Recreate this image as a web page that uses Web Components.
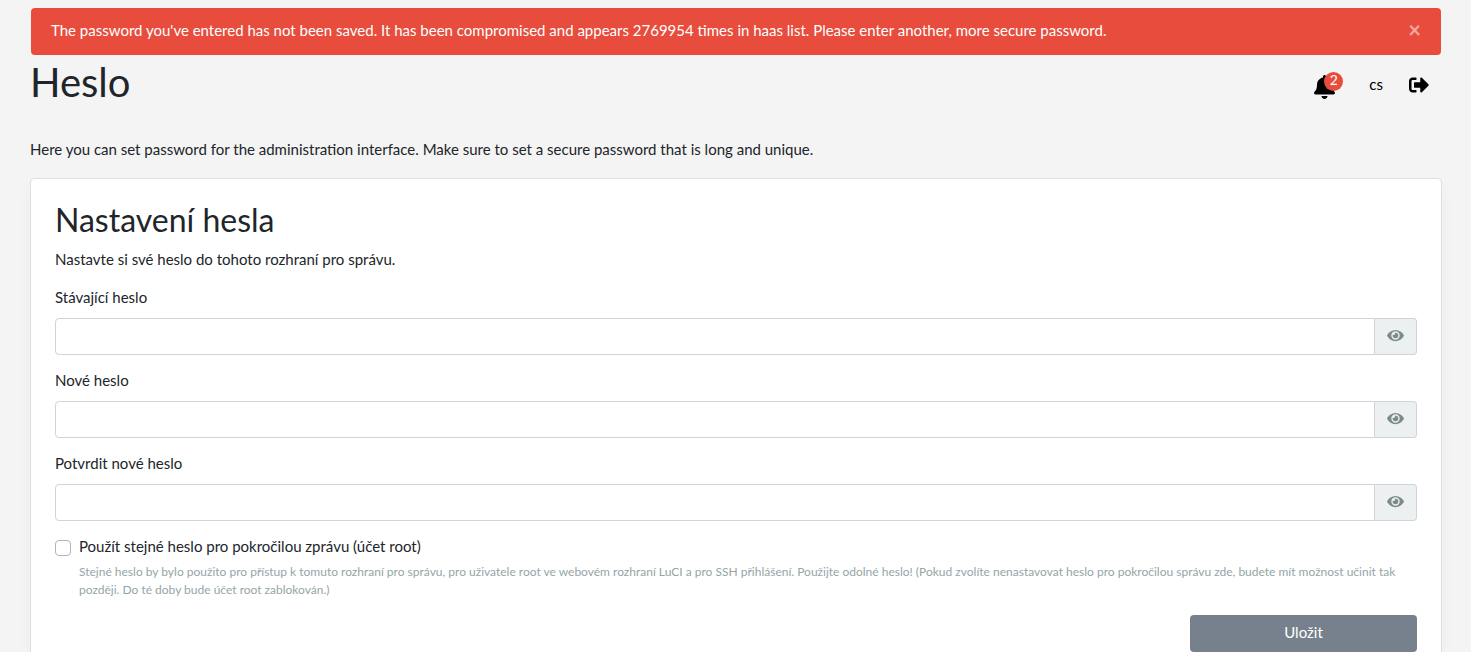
<!DOCTYPE html>
<html lang="cs">
<head>
<meta charset="utf-8">
<meta name="viewport" content="width=device-width, initial-scale=1">
<title>Heslo</title>
<style>
  body { margin: 0; background: #f4f4f4; color: #212529; font: 15px/22px Lato, sans-serif; }
</style>
</head>
<body>
<password-page></password-page>

<script>
const define = (name, html, setup) => {
  const template = document.createElement('template');
  template.innerHTML = `<style>*, ::before, ::after { box-sizing: border-box; } :host { display: block; }</style>${html}`;
  customElements.define(name, class extends HTMLElement {
    connectedCallback() {
      if (this.shadowRoot) return;
      this.attachShadow({ mode: 'open' }).append(template.content.cloneNode(true));
      if (setup) setup(this, this.shadowRoot);
    }
  });
};

define('alert-message', `
  <style>
    div { display: flex; align-items: flex-start; justify-content: space-between; margin: 0 1px;
      padding: 11px 20px 14px; border-radius: 4px; background: #e74c3c; color: #fff; }
    button { padding: 0; border: 0; background: none; color: #fff; opacity: .5;
      font: bold 22px/22px Lato, sans-serif; cursor: pointer; }
  </style>
  <div role="alert"><span><slot></slot></span><button type="button" aria-label="Zavřít">×</button></div>
`, (host, root) => root.querySelector('button').addEventListener('click', () => host.remove()));

define('top-controls', `
  <style>
    :host { display: flex; align-items: center; gap: 26px; padding: 6px 13px 0 0; }
    button, a { display: block; position: relative; padding: 0; border: 0; background: none; color: #000;
      font: 15px/22px Lato, sans-serif; text-decoration: none; cursor: pointer; }
    svg { display: block; fill: currentColor; }
    .language { padding-bottom: 2px; }
    .bell { width: 29px; padding-top: 4px; }
    .badge { position: absolute; top: 1px; right: 0; width: 19px; height: 19px; border-radius: 50%;
      background: #e74c3c; color: #fff; font-size: 14px; line-height: 16px; text-align: center; }
  </style>
  <button class="bell" type="button" aria-label="Oznámení">
    <svg width="21" height="24" viewBox="0 0 448 512"><path d="M224 512c35.32 0 63.97-28.65 63.97-64H160.03c0 35.35 28.65 64 63.97 64zm215.39-149.71c-19.32-20.76-55.47-51.99-55.47-154.29 0-77.7-54.48-139.9-127.94-155.16V32c0-17.67-14.32-32-31.98-32s-31.98 14.33-31.98 32v20.84C118.56 68.1 64.08 130.3 64.08 208c0 102.3-36.15 133.53-55.47 154.29-6 6.45-8.66 14.16-8.61 21.71.11 16.4 12.98 32 32.1 32h383.8c19.12 0 32-15.6 32.1-32 .05-7.55-2.61-15.27-8.61-21.71z"/></svg>
    <span class="badge">2</span>
  </button>
  <button class="language" type="button">cs</button>
  <a href="#logout" aria-label="Odhlásit">
    <svg width="20" height="20" viewBox="0 0 512 512"><path d="M497 273L329 441c-15 15-41 4.500-41-17v-96H152c-13.300 0-24-10.700-24-24v-96c0-13.300 10.700-24 24-24h136V88c0-21.400 25.900-32 41-17l168 168c9.300 9.400 9.300 24.600 0 34zM192 436v-40c0-6.600-5.400-12-12-12H96c-17.700 0-32-14.300-32-32V160c0-17.700 14.300-32 32-32h84c6.600 0 12-5.400 12-12V76c0-6.600-5.400-12-12-12H96c-53 0-96 43-96 96v192c0 53 43 96 96 96h84c6.600 0 12-5.400 12-12z"/></svg>
  </a>
`);

define('page-header', `
  <style>
    header { display: flex; justify-content: space-between; align-items: center; padding: 3px 0 32px; }
    h1 { margin: 0; font-size: 40px; line-height: 48px; font-weight: 400; }
  </style>
  <header><h1><slot></slot></h1><top-controls></top-controls></header>
`);

define('settings-card', `
  <style>
    section { padding: 24px; border: 1px solid #dfdfdf; border-radius: 4px; background: #fff;
      box-shadow: 0 8px 16px rgba(0, 0, 0, .03); }
  </style>
  <section><slot></slot></section>
`);

define('password-field', `
  <style>
    :host { margin-bottom: 14px; }
    label { display: block; margin-bottom: 10px; }
    .group { display: flex; height: 37px; }
    input { flex: 1; min-width: 0; padding: 6px 12px; border: 1px solid #ced4da; border-radius: 4px 0 0 4px;
      background: #fff; color: #7b8a8b; font: 15px/22px Lato, sans-serif; }
    button { display: flex; align-items: center; padding: 0 12px 2px; border: 1px solid #ced4da; border-left: 0;
      border-radius: 0 4px 4px 0; background: #ecf0f1; color: #7b8a8b; cursor: pointer; }
    svg { display: block; fill: currentColor; }
  </style>
  <label for="field"><slot></slot></label>
  <div class="group">
    <input id="field" type="password">
    <button type="button" aria-label="Zobrazit heslo">
      <svg width="17" height="15" viewBox="0 0 576 512"><path d="M572.520 241.400C518.290 135.590 410.930 64 288 64S57.680 135.640 3.480 241.410a32.350 32.350 0 0 0 0 29.190C57.710 376.410 165.070 448 288 448s230.320-71.640 284.520-177.410a32.350 32.350 0 0 0 0-29.190zM288 400a144 144 0 1 1 144-144 143.930 143.930 0 0 1-144 144zm0-240a95.310 95.310 0 0 0-25.310 3.790 47.850 47.850 0 0 1-66.900 66.900A95.780 95.780 0 1 0 288 160z"/></svg>
    </button>
  </div>
`, (host, root) => {
  const input = root.querySelector('input');
  root.querySelector('button').addEventListener('click', () => {
    input.type = input.type === 'password' ? 'text' : 'password';
  });
});

define('check-option', `
  <style>
    :host { margin-bottom: 16px; }
    .row { display: flex; align-items: center; gap: 8px; }
    input { appearance: none; width: 16px; height: 16px; margin: 4px 0 0; border: 1px solid #adb5bd;
      border-radius: 4px; background: #fff; }
    input:checked { background: #2c3e50; }
    small { display: block; margin: 6px 0 0 24px; color: #95a5a6; font-size: 12px; line-height: 18px; }
  </style>
  <div class="row"><input id="check" type="checkbox" aria-describedby="hint"><label for="check"><slot></slot></label></div>
  <small id="hint"><slot name="hint"></slot></small>
`);

define('save-button', `
  <style>
    :host { display: grid; grid-template-columns: 5fr 1fr; }
    button { grid-column: 2; height: 37px; padding: 0 12px 4px; border: 0; border-radius: 4px;
      background: #76818d; color: #fff; font: 15px/22px Lato, sans-serif; cursor: pointer; }
  </style>
  <button type="submit"><slot></slot></button>
`);

define('password-page', `
  <style>
    main { padding: 8px 29px 0 30px; }
    p { margin: 0 0 16px; }
    .intro { margin-bottom: 18px; }
    h2 { margin: 0 0 11px; font-size: 32px; line-height: 34px; font-weight: 400; }
  </style>
  <main>
    <alert-message>The password you've entered has not been saved. It has been compromised and appears 2769954 times in haas list. Please enter another, more secure password.</alert-message>
    <page-header>Heslo</page-header>
    <p class="intro">Here you can set password for the administration interface. Make sure to set a secure password that is long and unique.</p>
    <settings-card>
      <h2>Nastavení hesla</h2>
      <p>Nastavte si své heslo do tohoto rozhraní pro správu.</p>
      <form>
        <password-field>Stávající heslo</password-field>
        <password-field>Nové heslo</password-field>
        <password-field>Potvrdit nové heslo</password-field>
        <check-option>Použít stejné heslo pro pokročilou zprávu (účet root)<span slot="hint">Stejné heslo by bylo použito pro přístup k tomuto rozhraní pro správu, pro uživatele root ve webovém rozhraní LuCI a pro SSH přihlášení. Použijte odolné heslo! (Pokud zvolíte nenastavovat heslo pro pokročilou správu zde, budete mít možnost učinit tak později. Do té doby bude účet root zablokován.)</span></check-option>
        <save-button>Uložit</save-button>
      </form>
    </settings-card>
  </main>
`);
</script>
</body>
</html>
